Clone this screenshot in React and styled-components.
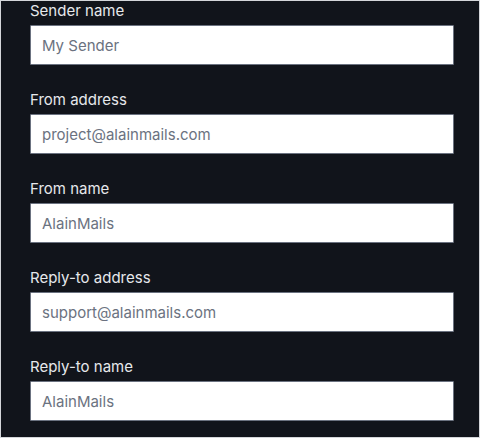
import styled, { createGlobalStyle } from 'styled-components';

const GlobalStyle = createGlobalStyle`
  html, body {
    margin: 0;
    padding: 0;
    background: #ffffff;
  }
  * {
    box-sizing: border-box;
  }
`;

const Frame = styled.div`
  width: 480px;
  height: 438px;
  border: 1px solid #d4d6da;
  background: #11141b;
  overflow: hidden;
  padding: 0 26px 0 29px;
  font-family: Inter, 'Noto Sans', sans-serif;
`;

const Form = styled.form`
  display: flex;
  flex-direction: column;
  gap: 25px;
`;

const Field = styled.div`
  display: flex;
  flex-direction: column;
  gap: 4px;
`;

const Label = styled.label`
  font-size: 15px;
  line-height: 20px;
  color: #e6e8eb;
`;

const Input = styled.input`
  width: 424px;
  height: 40px;
  padding: 0 11px;
  border: 1px solid #6b7280;
  border-radius: 1px;
  background: #ffffff;
  font-family: inherit;
  font-size: 15px;
  color: #6b7280;
  outline: none;

  &::placeholder {
    color: #6b7280;
  }
`;

const fields = [
  { label: 'Sender name', value: 'My Sender' },
  { label: 'From address', value: 'project@alainmails.com' },
  { label: 'From name', value: 'AlainMails' },
  { label: 'Reply-to address', value: 'support@alainmails.com' },
  { label: 'Reply-to name', value: 'AlainMails' },
];

export default function App() {
  return (
    <>
      <GlobalStyle />
      <Frame>
        <Form>
          {fields.map((f) => (
            <Field key={f.label}>
              <Label>{f.label}</Label>
              <Input type="text" defaultValue={f.value} readOnly />
            </Field>
          ))}
        </Form>
      </Frame>
    </>
  );
}
